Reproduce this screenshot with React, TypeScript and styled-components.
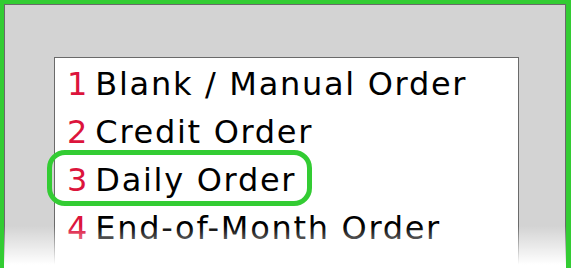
import styled, { createGlobalStyle } from 'styled-components';

const orders = [
  { key: '1', label: 'Blank / Manual Order' },
  { key: '2', label: 'Credit Order' },
  { key: '3', label: 'Daily Order', marked: true },
  { key: '4', label: 'End-of-Month Order' },
];

const GlobalStyle = createGlobalStyle`
  html, body {
    margin: 0;
    padding: 0;
    background: #ffffff;
  }
`;

function App() {
  return (
    <>
      <GlobalStyle />
      <Frame>
        <Panel>
          <OrderList>
            {orders.map((order) => (
              <OrderItem key={order.key} $marked={order.marked}>
                <Hotkey>{order.key}</Hotkey>
                <Label>{order.label}</Label>
              </OrderItem>
            ))}
          </OrderList>
        </Panel>
        <Fade />
      </Frame>
    </>
  );
}

const Frame = styled.div`
  position: relative;
  width: 571px;
  height: 268px;
  box-sizing: border-box;
  border-style: solid;
  border-color: #33cc33;
  border-width: 4px 5px 0 4px;
  overflow: hidden;
`;

const Panel = styled.div`
  height: 100%;
  box-sizing: border-box;
  background: #d3d3d3;
  border: 1px solid #6a6a6a;
  border-bottom: none;
  padding: 52px 46px 0 49px;
`;

const OrderList = styled.div`
  height: 100%;
  box-sizing: border-box;
  background: #ffffff;
  border: 1px solid #6a6a6a;
  border-bottom: none;
  padding: 2px 10px 0 12px;
  display: flex;
  flex-direction: column;
  font-family: "DejaVu Sans", Verdana, sans-serif;
  font-size: 32px;
  line-height: 48px;
  color: #000000;
`;

const OrderItem = styled.div<{ $marked?: boolean }>`
  position: relative;
  display: flex;
  width: fit-content;

  &::after {
    content: '';
    display: ${(p) => (p.$marked ? 'block' : 'none')};
    position: absolute;
    inset: -6px -16px -2px -20px;
    border: 5px solid #33cc33;
    border-radius: 18px;
    pointer-events: none;
  }
`;

const Hotkey = styled.span`
  color: #dc143c;
  margin-right: 8px;
`;

const Label = styled.span`
  letter-spacing: 1.7px;
`;

const Fade = styled.div`
  position: absolute;
  left: 0;
  right: 0;
  bottom: 0;
  height: 42px;
  background: linear-gradient(to bottom, rgba(255, 255, 255, 0), #ffffff 92%);
  pointer-events: none;
`;

export default App;
